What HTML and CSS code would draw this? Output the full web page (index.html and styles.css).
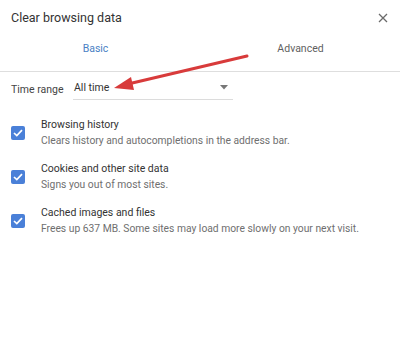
FILE: index.html
```html
<!DOCTYPE html>
<html>
<head>
<meta charset="utf-8">
<link rel="stylesheet" href="styles.css">
</head>
<body>
<div class="dialog">
  <div class="header">
    <div class="title">Clear browsing data</div>
    <svg class="close" width="10" height="10" viewBox="0 0 10 10"><path d="M1 1L9 9M9 1L1 9" stroke="#6b6b6b" stroke-width="1.3" fill="none"/></svg>
  </div>
  <div class="tabs">
    <div class="tab active">Basic</div>
    <div class="tab">Advanced</div>
  </div>
  <div class="range">
    <span class="range-label">Time range</span>
    <div class="select">
      <span>All time</span>
      <svg width="8" height="5" viewBox="0 0 8 5"><path d="M0 0H8L4 4.5Z" fill="#777"/></svg>
    </div>
  </div>
  <div class="items">
    <div class="item">
      <div class="check"><svg width="10" height="8" viewBox="0 0 10 8"><path d="M1 4L3.8 6.6L9 1.2" stroke="#fff" stroke-width="1.7" fill="none"/></svg></div>
      <div class="texts">
        <div class="name">Browsing history</div>
        <div class="desc">Clears history and autocompletions in the address bar.</div>
      </div>
    </div>
    <div class="item">
      <div class="check"><svg width="10" height="8" viewBox="0 0 10 8"><path d="M1 4L3.8 6.6L9 1.2" stroke="#fff" stroke-width="1.7" fill="none"/></svg></div>
      <div class="texts">
        <div class="name">Cookies and other site data</div>
        <div class="desc">Signs you out of most sites.</div>
      </div>
    </div>
    <div class="item">
      <div class="check"><svg width="10" height="8" viewBox="0 0 10 8"><path d="M1 4L3.8 6.6L9 1.2" stroke="#fff" stroke-width="1.7" fill="none"/></svg></div>
      <div class="texts">
        <div class="name">Cached images and files</div>
        <div class="desc">Frees up 637 MB. Some sites may load more slowly on your next visit.</div>
      </div>
    </div>
  </div>
  <svg class="arrow" width="400" height="100" viewBox="0 0 400 100">
    <path d="M247 56L128 84" stroke="#d83b3b" stroke-width="3" stroke-linecap="round" fill="none"/>
    <path d="M114 88L131 77L134 90Z" fill="#d83b3b"/>
  </svg>
</div>
</body>
</html>
```
FILE: styles.css
```css
html, body {
  margin: 0;
  padding: 0;
  background: #fff;
}
body {
  width: 400px;
  height: 362px;
  overflow: hidden;
  font-family: Roboto, "Liberation Sans", sans-serif;
  color: #333;
}
.dialog {
  position: relative;
  width: 400px;
  height: 362px;
}
.header {
  display: flex;
  justify-content: space-between;
  align-items: center;
  padding: 8px 12px 0 11px;
  height: 18px;
}
.title {
  font-size: 12.5px;
  color: #333;
}
.close {
  margin-top: 1px;
}
.tabs {
  display: flex;
  margin-top: 8px;
  border-bottom: 1px solid #dedede;
  height: 37px;
}
.tab {
  flex: 1;
  text-align: center;
  font-size: 10.5px;
  color: #5f5f5f;
  padding-top: 8px;
}
.tab.active {
  color: #4a7fc4;
  padding-right: 14px;
}
.tab:last-child {
  padding-right: 4px;
}
.range {
  display: flex;
  align-items: center;
  padding: 7px 0 0 11px;
  font-size: 10.5px;
}
.range-label {
  color: #444;
  width: 62px;
}
.select {
  display: flex;
  justify-content: space-between;
  align-items: center;
  width: 160px;
  padding: 2px 5px 5px 1px;
  border-bottom: 1px solid #dcdcdc;
  box-sizing: border-box;
  color: #333;
}
.items {
  display: flex;
  flex-direction: column;
  gap: 15px;
  padding: 18px 0 0 11px;
}
.item {
  display: flex;
  align-items: center;
  gap: 16px;
}
.check {
  width: 14px;
  height: 14px;
  border-radius: 2px;
  background: #4a80d8;
  display: flex;
  align-items: center;
  justify-content: center;
}
.texts {
  display: flex;
  flex-direction: column;
  gap: 3px;
}
.name {
  font-size: 10.5px;
  color: #333;
}
.desc {
  font-size: 10.3px;
  color: #6f6f6f;
}
.arrow {
  position: absolute;
  left: 0;
  top: 0;
  pointer-events: none;
}
```
